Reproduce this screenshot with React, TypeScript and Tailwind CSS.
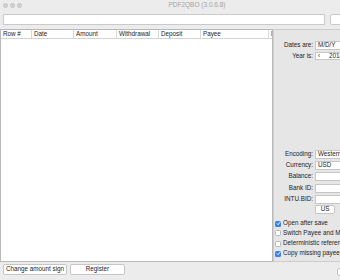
import React from "react";

const cols = [
  { label: "Row #", w: 31 },
  { label: "Date", w: 42 },
  { label: "Amount", w: 43 },
  { label: "Withdrawal", w: 42 },
  { label: "Deposit", w: 42 },
  { label: "Payee", w: 68 },
  { label: "Description", w: 80 },
];

function Field({ children, className = "" }: { children?: React.ReactNode; className?: string }) {
  return (
    <div className={`h-full bg-white border border-[#c6c6c6] flex items-center px-[2px] ${className}`}>
      {children}
    </div>
  );
}

function Row({ label, top, h, children }: { label: string; top: string; h: string; children?: React.ReactNode }) {
  return (
    <div className={`flex items-center gap-[2px] ${top} ${h}`}>
      <div className="w-[39px] text-right shrink-0">{label}</div>
      <div className="flex-1 h-full">{children}</div>
    </div>
  );
}

function Check({ label, checked, top }: { label: string; checked?: boolean; top: string }) {
  return (
    <div className={`flex items-center gap-[2px] h-[9px] pl-[1px] ${top}`}>
      {checked ? (
        <div className="w-[6px] h-[6px] rounded-[1.5px] bg-[#3b82e8] flex items-center justify-center shrink-0">
          <svg width="5" height="5" viewBox="0 0 10 10">
            <path d="M2 5.2 L4.2 7.4 L8 2.6" stroke="white" strokeWidth="1.8" fill="none" strokeLinecap="round" strokeLinejoin="round" />
          </svg>
        </div>
      ) : (
        <div className="w-[6px] h-[6px] rounded-[1.5px] bg-white border border-[#b5b5b5] shrink-0" />
      )}
      <span className="whitespace-nowrap">{label}</span>
    </div>
  );
}

export default function App() {
  return (
    <div className="w-[340px] h-[280px] overflow-hidden bg-[#ececec] font-['Liberation_Sans',Arial,sans-serif] text-[6.3px] leading-none text-[#1c1c1c]">
      <div className="w-[394px] flex flex-col">
        {/* title bar */}
        <div className="h-[11px] relative flex items-center justify-center">
          <div className="absolute left-[3px] top-[3px] flex gap-[2.5px]">
            <div className="w-[4.5px] h-[4.5px] rounded-full bg-[#d2d2d2] border border-[#c4c4c4]" />
            <div className="w-[4.5px] h-[4.5px] rounded-full bg-[#d2d2d2] border border-[#c4c4c4]" />
            <div className="w-[4.5px] h-[4.5px] rounded-full bg-[#d2d2d2] border border-[#c4c4c4]" />
          </div>
          <span className="text-[#a4a4a4] text-[6.5px]">PDF2QBO (3.0.6.8)</span>
        </div>

        {/* path row */}
        <div className="flex gap-[5px] pl-[3px] mt-[3px] h-[11px]">
          <div className="w-[322px] h-full bg-white border border-[#cacaca]" />
          <div className="w-[58px] h-full bg-white border border-[#cacaca] rounded-[2px] flex items-center pl-[9px] text-[#555]">
            Open
          </div>
        </div>

        {/* main */}
        <div className="flex mt-[4px] h-[233px]">
          <div className="w-[273px] shrink-0 bg-white border border-[#b9b9b9] overflow-hidden">
            <div className="flex h-[9px] border-b border-[#d4d4d4]">
              {cols.map((c, i) => (
                <div
                  key={i}
                  style={{ width: c.w }}
                  className="shrink-0 h-full flex items-center pl-[2px] border-r border-[#d8d8d8] whitespace-nowrap"
                >
                  {c.label}
                </div>
              ))}
            </div>
          </div>

          <div className="w-[121px] shrink-0 border border-[#cdcdcd] bg-[#e6e6e6] flex flex-col">
            <Row label="Dates are:" top="mt-[11px]" h="h-[9px]">
              <Field>M/D/Y</Field>
            </Row>
            <Row label="Year is:" top="mt-[2px]" h="h-[8px]">
              <Field className="gap-[9px]">
                <span>‹</span>
                <span>2018</span>
              </Field>
            </Row>

            <Row label="Encoding:" top="mt-[90px]" h="h-[9px]">
              <Field>Western (Windows 1252)</Field>
            </Row>
            <Row label="Currency:" top="mt-[2px]" h="h-[9px]">
              <Field>USD</Field>
            </Row>
            <Row label="Balance:" top="mt-[2px]" h="h-[9px]">
              <Field />
            </Row>
            <Row label="Bank ID:" top="mt-[3px]" h="h-[9px]">
              <Field />
            </Row>
            <Row label="INTU.BID:" top="mt-[2px]" h="h-[9px]">
              <Field />
            </Row>
            <div className="flex mt-[1px] h-[9px] pl-[41px]">
              <div className="w-[20px] h-full bg-white border border-[#c6c6c6] rounded-[2px] flex items-center justify-center">
                US
              </div>
            </div>

            <Check label="Open after save" checked top="mt-[5px]" />
            <Check label="Switch Payee and Memo" top="mt-[0.5px]" />
            <Check label="Deterministic reference numbers" top="mt-[1.5px]" />
            <Check label="Copy missing payee to memo" checked top="mt-[1px]" />
          </div>
        </div>

        {/* bottom */}
        <div className="flex items-start mt-[2px] pl-[3px] gap-[3px]">
          <div className="w-[64px] h-[11px] bg-white border border-[#c6c6c6] rounded-[2px] flex items-center justify-center whitespace-nowrap">
            Change amount sign
          </div>
          <div className="w-[55px] h-[11px] bg-white border border-[#c6c6c6] rounded-[2px] flex items-center justify-center">
            Register
          </div>
          <div className="ml-[209px] mt-[4px] w-[50px] h-[8px] bg-white border border-[#c6c6c6] rounded-[2px]" />
        </div>
      </div>
    </div>
  );
}
